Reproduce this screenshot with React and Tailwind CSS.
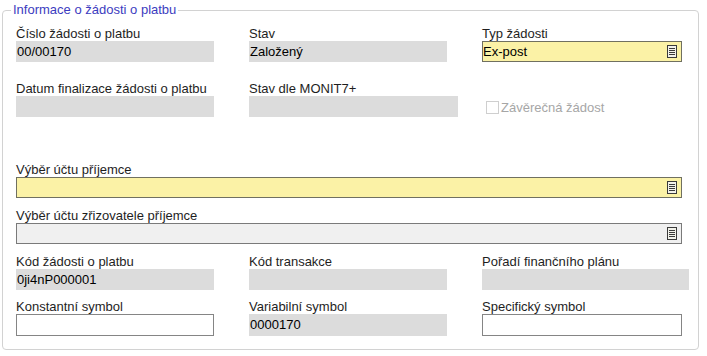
import React from "react";

function ListIcon() {
  return (
    <svg width="10" height="13" viewBox="0 0 10 13" className="block" shapeRendering="crispEdges">
      <rect x="0" y="0" width="10" height="13" fill="#3a3a3a" />
      <rect x="1" y="1" width="8" height="11" fill="#f2f2ea" />
      <rect x="2" y="3" width="6" height="1" fill="#3a3a3a" />
      <rect x="2" y="5" width="6" height="1" fill="#3a3a3a" />
      <rect x="2" y="7" width="6" height="1" fill="#3a3a3a" />
      <rect x="2" y="9" width="6" height="1" fill="#3a3a3a" />
    </svg>
  );
}

function Label({ children }) {
  return <div className="h-[14px] leading-[14px] text-[#1e1e1e] whitespace-nowrap">{children}</div>;
}

function GreyBox({ w, children }) {
  return (
    <div className={`${w} h-[21px] bg-[#dcdcdc] pl-[1px] leading-[21px] text-black`}>{children}</div>
  );
}

export default function App() {
  return (
    <div
      className="w-[707px] h-[356px] bg-white overflow-hidden text-[13px]"
      style={{ fontFamily: '"Liberation Sans", Arial, sans-serif' }}
    >
      <div className="relative ml-[2px] mt-[10px] w-[697px] h-[340px] border border-[#d2d2d2] rounded-[4px]">
        <div className="absolute left-[8px] top-[-8px] bg-white px-[2px] leading-[14px] text-[#3c3cc0]">
          Informace o žádosti o platbu
        </div>
        <div className="pl-[13px] pt-[16px] flex flex-col">
          {/* Row 1 */}
          <div className="flex">
            <div className="w-[233px]">
              <Label>Číslo žádosti o platbu</Label>
              <GreyBox w="w-[198px]">00/00170</GreyBox>
            </div>
            <div className="w-[233px]">
              <Label>Stav</Label>
              <GreyBox w="w-[198px]">Založený</GreyBox>
            </div>
            <div className="w-[200px]">
              <Label>Typ žádosti</Label>
              <div className="w-[200px] h-[21px] border border-[#707060] bg-[#fbf2a6] flex items-center justify-between pr-[4px] text-black">
                <span className="leading-[19px]">Ex-post</span>
                <ListIcon />
              </div>
            </div>
          </div>
          {/* Row 2 */}
          <div className="flex mt-[20px]">
            <div className="w-[233px]">
              <Label>Datum finalizace žádosti o platbu</Label>
              <GreyBox w="w-[198px]"></GreyBox>
            </div>
            <div className="w-[233px]">
              <Label>Stav dle MONIT7+</Label>
              <GreyBox w="w-[209px]"></GreyBox>
            </div>
            <div className="w-[200px] pt-[16px] pl-[4px] flex items-center">
              <div className="w-[13px] h-[13px] border border-[#cfcfcf] bg-white"></div>
              <span className="ml-[2px] text-[#a6a6a6] leading-[14px]">Závěrečná žádost</span>
            </div>
          </div>
          {/* Row 3 */}
          <div className="mt-[46px]">
            <Label>Výběr účtu příjemce</Label>
            <div className="w-[666px] h-[21px] border border-[#707060] bg-[#fbf2a6] flex items-center justify-end pr-[4px]">
              <ListIcon />
            </div>
          </div>
          {/* Row 4 */}
          <div className="mt-[11px]">
            <Label>Výběr účtu zřizovatele příjemce</Label>
            <div className="w-[666px] h-[21px] border border-[#7a7a7a] bg-[#f0f0f0] flex items-center justify-end pr-[4px]">
              <ListIcon />
            </div>
          </div>
          {/* Row 5 */}
          <div className="flex mt-[11px]">
            <div className="w-[233px]">
              <Label>Kód žádosti o platbu</Label>
              <GreyBox w="w-[198px]">0ji4nP000001</GreyBox>
            </div>
            <div className="w-[233px]">
              <Label>Kód transakce</Label>
              <GreyBox w="w-[198px]"></GreyBox>
            </div>
            <div className="w-[207px]">
              <Label>Pořadí finančního plánu</Label>
              <GreyBox w="w-[207px]"></GreyBox>
            </div>
          </div>
          {/* Row 6 */}
          <div className="flex mt-[10px]">
            <div className="w-[233px]">
              <Label>Konstantní symbol</Label>
              <div className="w-[198px] h-[22px] border border-[#858585] bg-white"></div>
            </div>
            <div className="w-[233px]">
              <Label>Variabilní symbol</Label>
              <div className="w-[198px] h-[22px] bg-[#dcdcdc] pl-[1px] leading-[22px] text-black">0000170</div>
            </div>
            <div className="w-[200px]">
              <Label>Specifický symbol</Label>
              <div className="w-[200px] h-[22px] border border-[#858585] bg-white"></div>
            </div>
          </div>
        </div>
      </div>
    </div>
  );
}
